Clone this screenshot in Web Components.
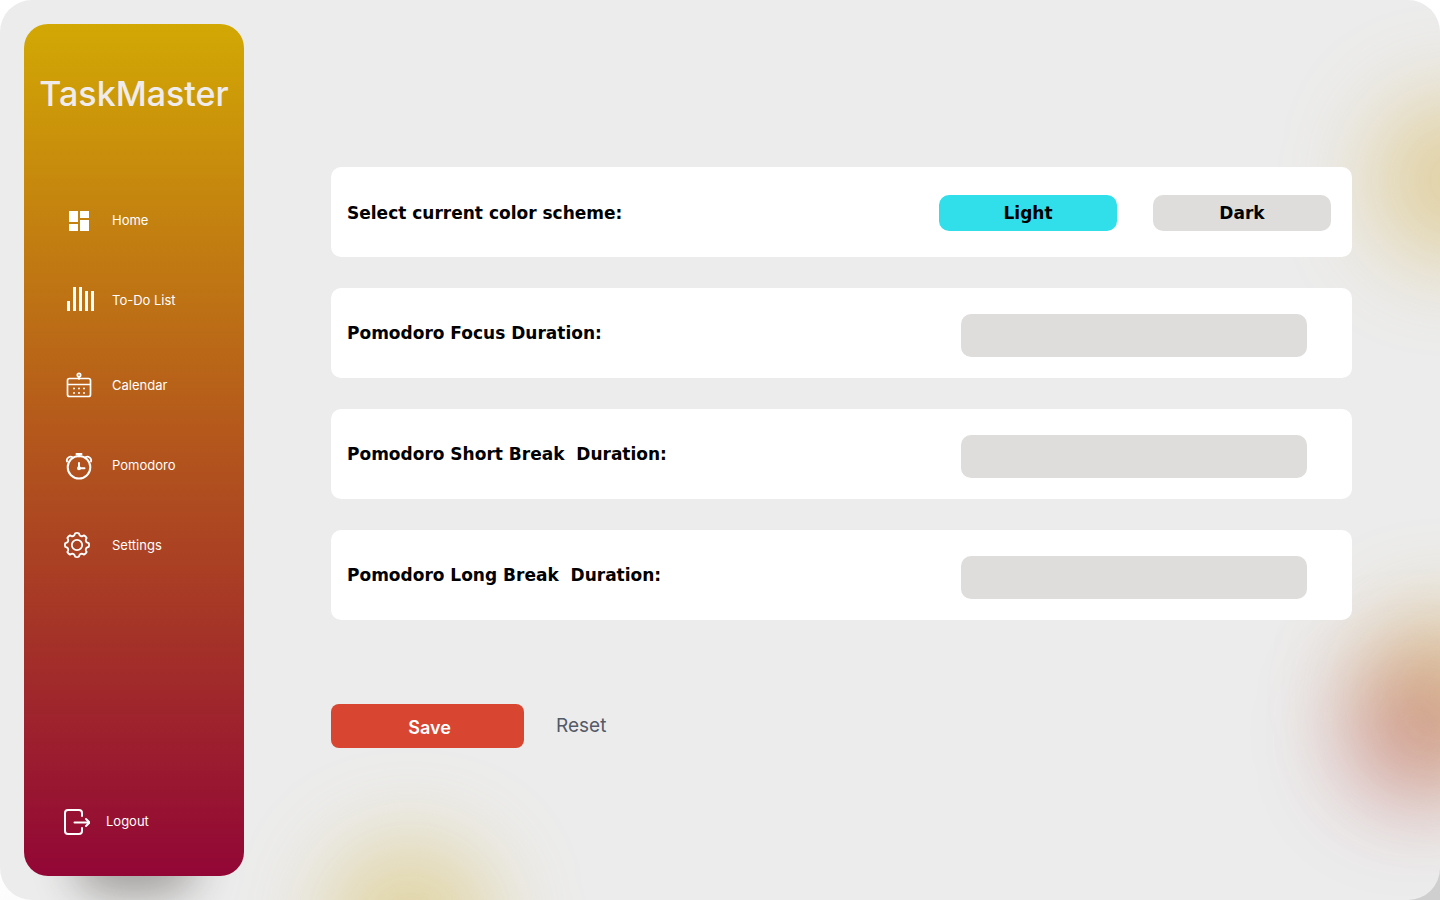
<!DOCTYPE html>
<html lang="en">
<head>
<meta charset="utf-8">
<title>TaskMaster – Settings</title>
<style>
  body { margin: 0; background: linear-gradient(150deg, #fff 50%, #cfcfcf 90%); font-family: Inter, "Liberation Sans", sans-serif; color: #000; }
</style>
</head>
<body>
<task-shell>
  <task-sidebar slot="sidebar"></task-sidebar>
  <settings-form></settings-form>
</task-shell>

<template id="shell-tpl">
  <style>
    :host { display: flex; position: relative; isolation: isolate; overflow: hidden; box-sizing: border-box; min-height: 100vh; padding: 24px; border-radius: 32px; background: #ececec; }
    main { flex: 1; min-width: 0; }
    .glow { position: absolute; z-index: -1; border-radius: 50%; filter: blur(44px); }
    .top { width: 170px; height: 170px; right: -100px; top: 95px; background: rgba(204, 160, 30, .36); }
    .low { width: 170px; height: 170px; left: 325px; bottom: -110px; background: rgba(204, 168, 30, .36); }
    .side { width: 170px; height: 170px; right: -90px; bottom: 120px; background: rgba(200, 148, 20, .36); }
    .red { width: 150px; height: 150px; right: -50px; bottom: 92px; background: rgba(165, 20, 54, .28); }
    .shade { width: 130px; height: 60px; left: 70px; bottom: 3px; filter: blur(20px); background: #2a2520; opacity: .38; }
  </style>
  <div class="glow top"></div><div class="glow low"></div>
  <div class="glow side"></div><div class="glow red"></div><div class="glow shade"></div>
  <slot name="sidebar"></slot>
  <main><slot></slot></main>
</template>

<template id="sidebar-tpl">
  <style>
    :host { display: flex; flex-direction: column; flex: none; box-sizing: border-box; width: 220px; padding: 46px 0 15px; border-radius: 24px; background: linear-gradient(#d2a804, #b4581c 48%, #920636); }
    h1 { margin: 0 0 63px; text-align: center; font: 500 34px/47px Inter, sans-serif; color: #f0ecec; }
    nav { display: flex; flex-direction: column; gap: 5px; }
    ul { margin: 0; padding: 0; list-style: none; }
    nav + nav { margin-top: auto; }
  </style>
  <h1>TaskMaster</h1>
  <nav aria-label="Main">
    <ul>
      <li><nav-item icon="home">Home</nav-item></li>
      <li><nav-item icon="todo">To-Do List</nav-item></li>
    </ul>
    <ul>
      <li><nav-item icon="calendar">Calendar</nav-item></li>
      <li><nav-item icon="pomodoro">Pomodoro</nav-item></li>
      <li><nav-item icon="settings">Settings</nav-item></li>
    </ul>
  </nav>
  <nav aria-label="Account"><nav-item icon="logout">Logout</nav-item></nav>
</template>

<template id="nav-tpl">
  <style>
    :host { display: block; }
    a { display: flex; align-items: center; gap: 16px; height: 80px; padding-left: 40px; color: #fff; text-decoration: none; font-size: 13px; line-height: 20px; }
    svg { flex: none; height: 32px; fill: none; stroke: #fff; stroke-width: 2; stroke-linecap: round; stroke-linejoin: round; }
  </style>
  <a href="#"><svg aria-hidden="true"></svg><span><slot></slot></span></a>
</template>

<template id="form-tpl">
  <style>
    :host { display: block; padding: 143px 64px 0 87px; }
    .rows { display: grid; gap: 31px; }
    .actions { display: flex; align-items: center; gap: 32px; margin-top: 84px; }
    button { border: 0; padding: 0; background: none; font: 400 19px/24px Inter, sans-serif; cursor: pointer; }
    .save { width: 193px; height: 44px; padding: 3px 0 0 4px; border-radius: 8px; background: #d84632; color: #fff; font-weight: 600; font-size: 18px; }
    .reset { color: #555a68; }
  </style>
  <div class="rows">
    <scheme-row></scheme-row>
    <duration-row name="focus" label="Pomodoro Focus Duration:"></duration-row>
    <duration-row name="short" label="Pomodoro Short Break  Duration:"></duration-row>
    <duration-row name="long" label="Pomodoro Long Break  Duration:"></duration-row>
  </div>
  <div class="actions">
    <button class="save" type="button">Save</button>
    <button class="reset" type="button">Reset</button>
  </div>
</template>

<template id="scheme-tpl">
  <style>
    :host { display: flex; align-items: center; box-sizing: border-box; min-height: 90px; padding: 2px 21px 0 16px; border-radius: 10px; background: #fff; font: 700 17px/38px "DejaVu Sans", sans-serif; }
    span { flex: 1; }
    div { display: flex; gap: 36px; }
    button { width: 178px; height: 36px; border: 0; border-radius: 10px; padding: 0; background: #dedddb; font: inherit; line-height: 34px; color: #000; cursor: pointer; }
    button[aria-pressed="true"] { background: #30dfea; }
  </style>
  <span id="scheme">Select current color scheme:</span>
  <div role="group" aria-labelledby="scheme">
    <button type="button" aria-pressed="true">Light</button>
    <button type="button" aria-pressed="false">Dark</button>
  </div>
</template>

<template id="duration-tpl">
  <style>
    :host { display: flex; align-items: flex-start; box-sizing: border-box; min-height: 90px; padding: 26px 45px 21px 16px; border-radius: 10px; background: #fff; font: 700 17px/38px "DejaVu Sans", sans-serif; }
    label { flex: 1; white-space: pre-wrap; }
    input { box-sizing: border-box; width: 346px; height: 43px; border: 0; border-radius: 10px; padding: 0 16px; background: #dedddb; font: inherit; }
  </style>
  <label for="value"></label><input id="value" type="text">
</template>

<script>
  const stamp = (el, id) => {
    const root = el.attachShadow({ mode: 'open' });
    root.append(document.getElementById(id).content.cloneNode(true));
    return root;
  };

  // Outline of an eight-toothed gear with rounded tips and notches.
  const gear = (cx, cy) => {
    const pt = (r, deg) => {
      const a = deg * Math.PI / 180;
      return `${(cx + r * Math.sin(a)).toFixed(2)} ${(cy - r * Math.cos(a)).toFixed(2)}`;
    };
    let d = '';
    for (let i = 0; i < 8; i++) {
      const a = i * 45;
      d += `${i ? 'L' : 'M'}${pt(11.9, a - 9)}Q${pt(12.4, a)} ${pt(11.9, a + 9)}L${pt(10.5, a + 13)}Q${pt(9, a + 22.5)} ${pt(10.5, a + 32)}`;
    }
    return d + 'Z';
  };

  const ICONS = {
    home: [32, '<g fill="#fff" stroke="none"><path d="M5 7h9v11H5zM16 7h9v7h-9zM5 20h9v7H5zM16 16h9v11h-9z"/></g>'],
    todo: [32, '<path fill="#fff" stroke="none" d="M3 17h3v10H3zM9 3h3v24H9zM15 3h3v24h-3zM21 7h3v20h-3zM27 7h3v20h-3z"/>'],
    calendar: [32, '<g stroke-width="1.7"><rect x="3.5" y="9.5" width="23" height="18" rx="2"/><path d="M4 15.5h22M15 8v2"/><circle cx="15" cy="6" r="1.7"/></g><path d="M10 19.5h0M15 19.5h0M20 19.5h0M10 24h0M15 24h0M20 24h0"/>'],
    pomodoro: [32, '<circle cx="15" cy="18.2" r="11.3"/><path d="M12.5 5h5M15 5.5v2M15 14v5.200h5.5"/><path stroke-width="1.8" d="M3 12.500C2 9.500 5.500 6.500 8.600 8.200M27 12.500C28 9.500 24.500 6.500 21.400 8.200"/><circle cx="15" cy="19.2" r="1" fill="#fff"/>'],
    settings: [32, `<path stroke-width="1.8" d="${gear(13, 16)}"/><circle cx="13" cy="16" r="5.2" stroke-width="1.8"/>`],
    logout: [26, '<path d="M18 11V8q0-3-3-3H4Q1 5 1 8v18q0 3 3 3h11q3 0 3-3v-3M10.5 17.5H25M22 14l3.500 3.500L22 21"/>']
  };

  customElements.define('nav-item', class extends HTMLElement {
    constructor() { super(); stamp(this, 'nav-tpl'); }
    connectedCallback() {
      const [w, art] = ICONS[this.getAttribute('icon')];
      const svg = this.shadowRoot.querySelector('svg');
      svg.setAttribute('viewBox', `0 0 ${w} 32`);
      svg.setAttribute('width', w);
      svg.innerHTML = art;
    }
  });
  customElements.define('scheme-row', class extends HTMLElement {
    constructor() {
      super();
      const buttons = stamp(this, 'scheme-tpl').querySelectorAll('button');
      buttons.forEach(b => b.addEventListener('click', () =>
        buttons.forEach(o => o.setAttribute('aria-pressed', o === b))));
    }
  });
  customElements.define('duration-row', class extends HTMLElement {
    constructor() { super(); stamp(this, 'duration-tpl'); }
    connectedCallback() {
      this.shadowRoot.querySelector('label').textContent = this.getAttribute('label');
      this.shadowRoot.querySelector('input').name = this.getAttribute('name');
    }
  });
  customElements.define('settings-form', class extends HTMLElement {
    constructor() { super(); stamp(this, 'form-tpl'); }
  });
  customElements.define('task-sidebar', class extends HTMLElement {
    constructor() { super(); stamp(this, 'sidebar-tpl'); }
  });
  customElements.define('task-shell', class extends HTMLElement {
    constructor() { super(); stamp(this, 'shell-tpl'); }
  });
</script>
</body>
</html>
